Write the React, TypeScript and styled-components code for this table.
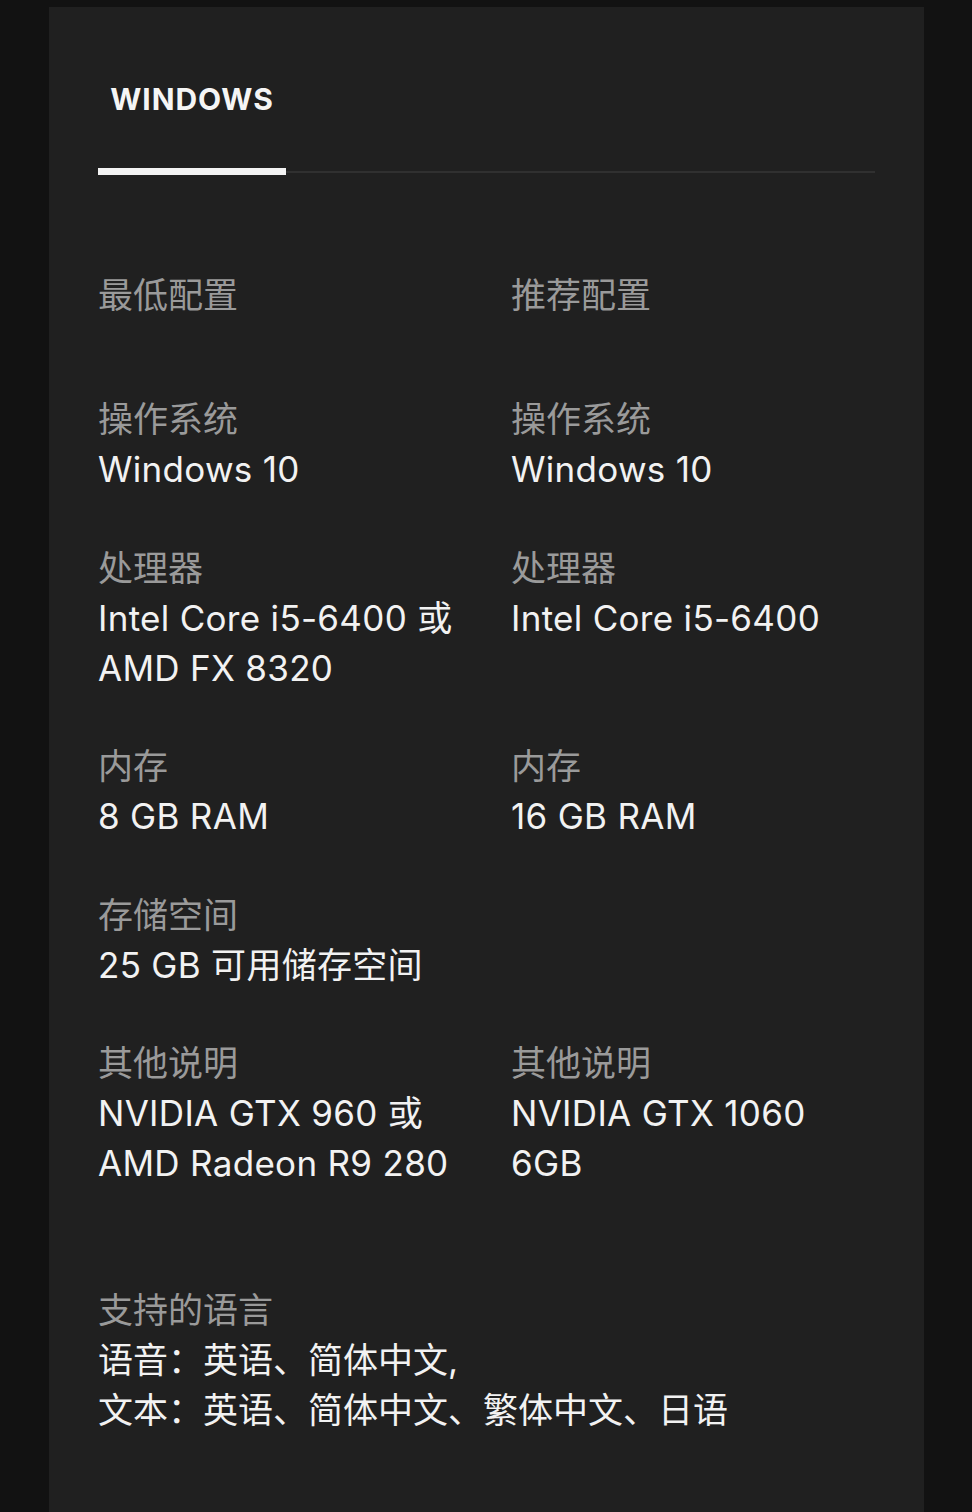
import React from 'react';
import styled, { createGlobalStyle } from 'styled-components';

const GlobalStyle = createGlobalStyle`
  html, body {
    margin: 0;
    background: #121212;
  }
  body {
    font-family: Inter, "Noto Sans CJK SC", sans-serif;
  }
`;

type Spec = { label: string; min?: string[]; rec?: string[] };

const specs: Spec[] = [
  { label: '操作系统', min: ['Windows 10'], rec: ['Windows 10'] },
  { label: '处理器', min: ['Intel Core i5-6400 或', 'AMD FX 8320'], rec: ['Intel Core i5-6400'] },
  { label: '内存', min: ['8 GB RAM'], rec: ['16 GB RAM'] },
  { label: '存储空间', min: ['25 GB 可用储存空间'] },
  { label: '其他说明', min: ['NVIDIA GTX 960 或', 'AMD Radeon R9 280'], rec: ['NVIDIA GTX 1060', '6GB'] },
];

const App = () => {
  return (
    <>
      <GlobalStyle />
      <Panel>
        <TabList>
          <Tab type="button">WINDOWS</Tab>
        </TabList>

        <SpecGrid>
          <Heading>最低配置</Heading>
          <Heading>推荐配置</Heading>
          {specs.map((s) => (
            <React.Fragment key={s.label}>
              <Cell>
                {s.min && (
                  <>
                    <Label>{s.label}</Label>
                    <Value>{s.min.map((l) => <div key={l}>{l}</div>)}</Value>
                  </>
                )}
              </Cell>
              <Cell>
                {s.rec && (
                  <>
                    <Label>{s.label}</Label>
                    <Value>{s.rec.map((l) => <div key={l}>{l}</div>)}</Value>
                  </>
                )}
              </Cell>
            </React.Fragment>
          ))}
        </SpecGrid>

        <Languages>
          <Label>支持的语言</Label>
          <Value $cjk>
            <div>语音：英语、简体中文,</div>
            <div>文本：英语、简体中文、繁体中文、日语</div>
          </Value>
        </Languages>
      </Panel>
    </>
  );
};

const Panel = styled.div`
  box-sizing: border-box;
  width: 875px;
  min-height: 1505px;
  margin: 7px 0 0 49px;
  padding: 0 49px 120px 49px;
  background: #202020;
`;

const TabList = styled.div`
  display: flex;
  border-bottom: 2px solid #303030;
`;

const Tab = styled.button`
  box-sizing: border-box;
  width: 188px;
  margin: 0 0 -4px 0;
  padding: 74px 0 51px;
  background: transparent;
  border: 0;
  border-bottom: 7px solid #f3f3f3;
  color: #f5f5f5;
  font-family: Inter, sans-serif;
  font-size: 30px;
  font-weight: 700;
  line-height: 36px;
  letter-spacing: 0.03em;
  text-align: center;
  cursor: pointer;
`;

const SpecGrid = styled.div`
  display: grid;
  grid-template-columns: 363px 363px;
  column-gap: 50px;
  row-gap: 48.5px;
  margin-top: 97px;
`;

const Heading = styled.div`
  color: #9a9a9a;
  font-size: 35px;
  line-height: 50px;
  margin-bottom: 25.5px;
`;

const Cell = styled.div`
  display: flex;
  flex-direction: column;
`;

const Label = styled.div`
  color: #9a9a9a;
  font-size: 35px;
  line-height: 50px;
`;

const Value = styled.div<{ $cjk?: boolean }>`
  color: #f2f2f2;
  font-size: 35px;
  line-height: 50px;
  letter-spacing: ${(p) => (p.$cjk ? '0' : '0.3px')};
`;

const Languages = styled.div`
  margin-top: 97px;
`;

export default App;
